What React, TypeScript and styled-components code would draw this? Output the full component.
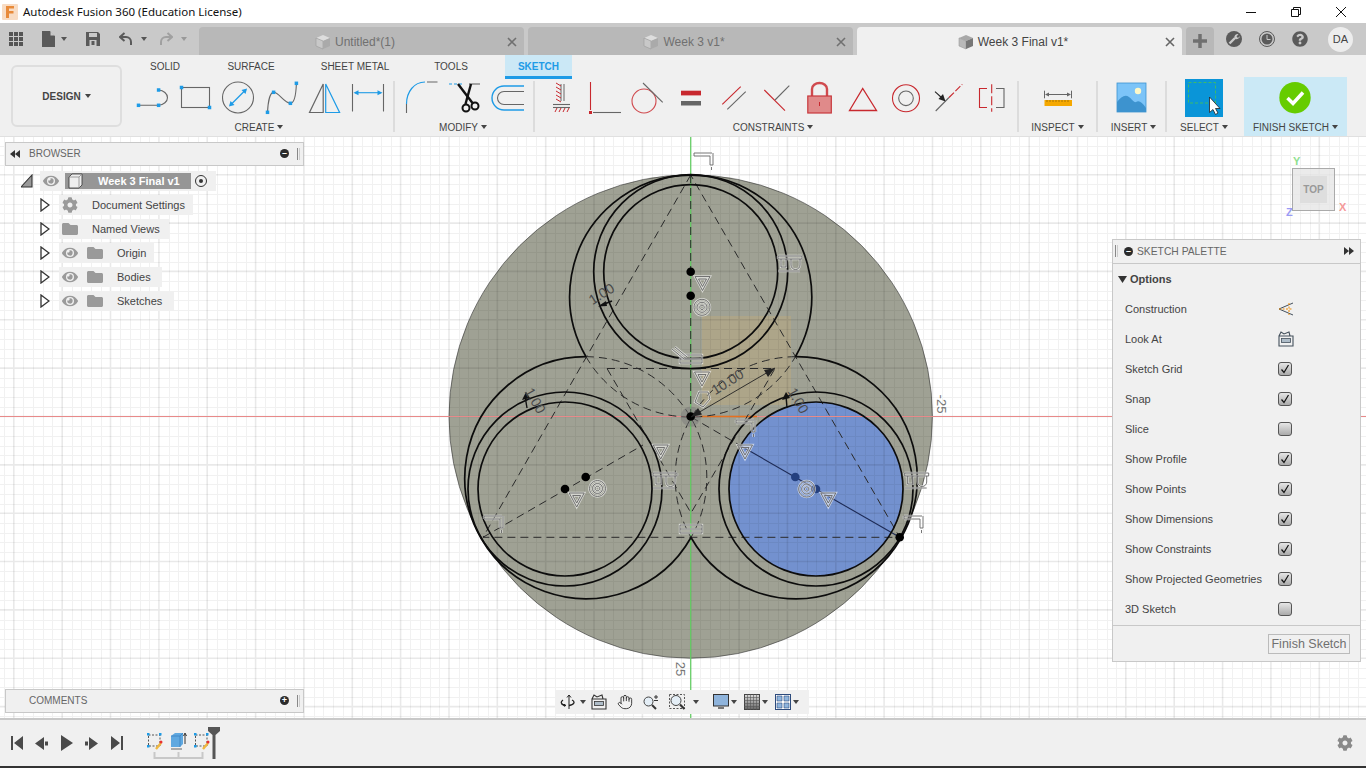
import React from 'react';
import styled, { createGlobalStyle } from 'styled-components';
import { FaCog, FaEye, FaFolder, FaQuestionCircle } from 'react-icons/fa';
import { Hand } from 'lucide-react';

const BLUE = '#1e9be6';
const GREY = '#666';
const RED = '#c8282e';
const SANS = '"Liberation Sans", Arial, sans-serif';

const GlobalStyle = createGlobalStyle`
    html, body { margin: 0; padding: 0; background: #fff; overflow: hidden; }
    body { font-family: ${SANS}; }
    * { box-sizing: border-box; }
`;

const Page = styled.div`
    width: 1366px;
    height: 768px;
    display: flex;
    flex-direction: column;
    overflow: hidden;
`;

/* title bar */
const TitleBar = styled.div`
    height: 23px;
    flex: none;
    display: flex;
    align-items: center;
    background: #fff;
    padding-left: 2px;
`;
const TitleText = styled.span`
    margin-left: 5px;
    font: 11.5px "Noto Sans", sans-serif;
    color: #111;
`;
const WinControls = styled.div`
    margin-left: auto;
    padding-right: 3px;
    display: flex;
`;
const WinButton = styled.div`
    width: 45px;
    height: 20px;
    display: flex;
    align-items: center;
    justify-content: center;
`;

/* tab bar */
const TabBar = styled.div`
    height: 32px;
    flex: none;
    display: flex;
    background: #c9c9c9;
`;
const QuickTools = styled.div`
    width: 199px;
    flex: none;
    display: flex;
    align-items: center;
`;
const Quick = styled.div<{ $ml: number }>`
    margin-left: ${(p) => p.$ml}px;
    display: flex;
`;
const Caret = styled.span<{ $color?: string }>`
    display: inline-block;
    width: 0;
    height: 0;
    border-left: 3.5px solid transparent;
    border-right: 3.5px solid transparent;
    border-top: 4px solid ${(p) => p.$color || '#444'};
`;
const DocTabs = styled.div`
    display: flex;
    gap: 4px;
    align-self: flex-end;
`;
const DocTab = styled.div<{ $active?: boolean }>`
    width: 325px;
    height: 28px;
    padding: 1px 5px 0 6px;
    display: flex;
    align-items: center;
    border-radius: 4px 4px 0 0;
    background: ${(p) => (p.$active ? '#f0f0f0' : '#b8b8b8')};
    color: ${(p) => (p.$active ? '#444' : '#707070')};
    font-size: 12px;
`;
const DocTabLabel = styled.div`
    flex: 1;
    display: flex;
    align-items: center;
    justify-content: center;
    gap: 4px;
`;
const PlusTab = styled.div`
    width: 28px;
    height: 28px;
    margin-left: 4px;
    align-self: flex-end;
    border-radius: 4px 4px 0 0;
    background: #b8b8b8;
    display: flex;
    align-items: center;
    justify-content: center;
`;
const AccountTools = styled.div`
    display: flex;
    align-items: center;
    color: #5a5a5a;
`;
const Avatar = styled.div`
    width: 25px;
    height: 25px;
    margin-left: 20px;
    border-radius: 50%;
    background: #ededed;
    color: #444;
    font-size: 11px;
    display: flex;
    align-items: center;
    justify-content: center;
`;

/* ribbon */
const Ribbon = styled.div`
    height: 82px;
    flex: none;
    display: flex;
    background: #f0f0f0;
    border-bottom: 1px solid #e0e0e0;
`;
const DesignButton = styled.div`
    width: 111px;
    height: 62px;
    margin: 10px 12px 0 11px;
    flex: none;
    border: 2px solid #dedede;
    border-radius: 6px;
    font-size: 10px;
    font-weight: bold;
    color: #444;
    display: flex;
    align-items: center;
    justify-content: center;
    gap: 4px;
`;
const RibbonBody = styled.div`
    display: flex;
    flex-direction: column;
`;
const TabRow = styled.div`
    height: 22px;
    display: flex;
    align-items: flex-start;
`;
const RibbonTab = styled.div<{ $w: number; $active?: boolean }>`
    width: ${(p) => p.$w}px;
    height: 24px;
    margin-left: ${(p) => (p.$active ? 7 : 0)}px;
    padding-top: 1px;
    display: flex;
    align-items: center;
    justify-content: center;
    font-size: 10px;
    font-weight: ${(p) => (p.$active ? 'bold' : 'normal')};
    color: ${(p) => (p.$active ? BLUE : '#444')};
    background: ${(p) => (p.$active ? '#cbe8f6' : 'transparent')};
    border-bottom: 3px solid ${(p) => (p.$active ? BLUE : 'transparent')};
`;
const GroupRow = styled.div`
    height: 60px;
    display: flex;
`;
const Group = styled.div<{ $w: number; $finish?: boolean }>`
    width: ${(p) => p.$w}px;
    padding-top: 1px;
    display: flex;
    flex-direction: column;
    align-items: center;
    background: ${(p) => (p.$finish ? '#cbe9f6' : 'transparent')};
`;
const ToolRow = styled.div`
    display: flex;
    height: 38px;
`;
const GroupLabel = styled.div<{ $pr?: number; $pl?: number }>`
    margin-top: 4px;
    padding-right: ${(p) => p.$pr || 0}px;
    padding-left: ${(p) => p.$pl || 0}px;
    height: 14px;
    display: flex;
    align-items: center;
    gap: 3px;
    font-size: 10px;
    color: #444;
`;
const Separator = styled.div`
    width: 2px;
    height: 51px;
    margin-top: 4px;
    background: #dcdcdc;
`;

/* viewport */
const Viewport = styled.div`
    position: relative;
    height: 581px;
    flex: none;
    overflow: hidden;
    background: #fff;
`;
const SketchCanvas = styled.svg`
    display: block;
`;
const DimText = styled.text`
    font-family: ${SANS};
    font-size: 14px;
    fill: #4a4a4a;
`;
const AxisText = styled.text`
    font-family: ${SANS};
    font-size: 13px;
    fill: #777;
`;

const PanelBar = styled.div`
    position: absolute;
    left: 5px;
    width: 299px;
    height: 24px;
    padding: 0 3px 1px 4px;
    display: flex;
    align-items: center;
    background: #f0f0f0;
    border: 1px solid #c8c8c8;
    color: #666;
    font-size: 10px;
`;
const BrowserBar = styled(PanelBar)`
    top: 5px;
`;
const CommentsBar = styled(PanelBar)`
    bottom: 5px;
`;
const PanelTitle = styled.span<{ $ml: number }>`
    margin-left: ${(p) => p.$ml}px;
`;
const RoundDot = styled.span`
    margin-left: auto;
    width: 9px;
    height: 9px;
    border-radius: 50%;
    background: #2b2b2b;
    display: flex;
    align-items: center;
    justify-content: center;
    color: #fff;
    font: bold 9px/9px ${SANS};
`;
const Grip = styled.span`
    margin-left: 8px;
    width: 3px;
    height: 12px;
    border-left: 1px solid #888;
    border-right: 1px solid #ccc;
`;

const Tree = styled.div`
    position: absolute;
    left: 21px;
    top: 34px;
    display: flex;
    flex-direction: column;
    gap: 4px;
`;
const TreeRow = styled.div`
    height: 20px;
    display: flex;
    align-items: center;
`;
const Chip = styled.div<{ $w: number }>`
    width: ${(p) => p.$w}px;
    height: 20px;
    display: flex;
    align-items: center;
    background: #f0f0f0;
    color: #444;
    font-size: 11px;
    position: relative;
`;
const Slot = styled.span<{ $x: number }>`
    position: absolute;
    left: ${(p) => p.$x}px;
    display: flex;
    color: #9a9a9a;
`;
const ChipLabel = styled(Slot)`
    color: #444;
`;
const RootBar = styled.div`
    position: absolute;
    left: 25px;
    top: 2px;
    width: 126px;
    height: 16px;
    background: #969696;
    color: #fff;
    font-weight: bold;
    font-size: 11px;
    line-height: 16px;
    padding-left: 33px;
`;
const Expander = styled.svg`
    width: 10px;
    height: 14px;
    margin: 0 9px 0 19px;
`;

const CubeWidget = styled.div`
    position: absolute;
    left: 1292px;
    top: 31px;
    width: 43px;
    height: 43px;
    background: rgba(228, 228, 228, 0.75);
    border: 1px solid #aaa;
    display: flex;
    align-items: center;
    justify-content: center;
`;
const CubeFace = styled.div`
    width: 27px;
    height: 27px;
    background: #dedede;
    color: #999;
    font-size: 10px;
    font-weight: bold;
    display: flex;
    align-items: center;
    justify-content: center;
`;
const AxisMark = styled.span<{ $color: string; $x: number; $y: number }>`
    position: absolute;
    left: ${(p) => p.$x}px;
    top: ${(p) => p.$y}px;
    color: ${(p) => p.$color};
    font-size: 11px;
    font-weight: bold;
    line-height: 11px;
`;

const Palette = styled.div`
    position: absolute;
    top: 102px;
    right: 5px;
    width: 249px;
    height: 423px;
    background: #f0f0f0;
    border: 1px solid #c8c8c8;
    display: flex;
    flex-direction: column;
    color: #444;
    font-size: 11px;
`;
const PaletteHead = styled.div`
    height: 24px;
    flex: none;
    padding: 0 6px 1px 2px;
    display: flex;
    align-items: center;
    border-bottom: 1px solid #c8c8c8;
    color: #666;
    font-size: 10.3px;
`;
const HeadDot = styled(RoundDot)`
    margin-left: 6px;
    margin-right: 4px;
`;
const HeadGrip = styled(Grip)`
    margin-left: 0;
`;
const OptionsRow = styled.div`
    height: 30px;
    padding-left: 5px;
    display: flex;
    align-items: center;
    gap: 3px;
    font-weight: bold;
    font-size: 11px;
`;
const OptionRow = styled.div`
    height: 30px;
    padding-left: 12px;
    display: flex;
    align-items: center;
    position: relative;
`;
const OptionControl = styled.div`
    position: absolute;
    left: 165px;
    display: flex;
`;
const CheckBox = styled.div`
    width: 14px;
    height: 14px;
    border: 1px solid #555;
    border-radius: 3px;
    background: linear-gradient(#e6e6e6, #aaa);
    display: flex;
    align-items: center;
    justify-content: center;
`;
const PaletteFoot = styled.div`
    margin-top: auto;
    height: 36px;
    border-top: 1px solid #c8c8c8;
    padding: 8px 10px 0 0;
    display: flex;
    justify-content: flex-end;
`;
const FinishButton = styled.div`
    width: 82px;
    height: 20px;
    border: 1px solid #bbb;
    color: #707070;
    font-size: 12.5px;
    display: flex;
    align-items: center;
    justify-content: center;
`;

const NavBar = styled.div`
    position: absolute;
    left: 555px;
    bottom: 4px;
    width: 254px;
    height: 24px;
    background: #f0f0f0;
    display: flex;
    align-items: center;
`;
const NavItem = styled.div<{ $ml: number }>`
    margin-left: ${(p) => p.$ml}px;
    display: flex;
    color: #333;
`;

/* timeline */
const Timeline = styled.div`
    height: 48px;
    flex: none;
    display: flex;
    align-items: center;
    background: #f0f0f0;
    border-top: 2px solid #c8c8c8;
    padding-left: 11px;
`;
const TimeItem = styled.div<{ $ml: number }>`
    margin-left: ${(p) => p.$ml}px;
    display: flex;
`;
const TimelineGear = styled.div`
    margin-left: auto;
    margin-right: 13px;
    color: #8a8a8a;
    display: flex;
`;
const BottomEdge = styled.div`
    height: 2px;
    flex: none;
    background: #333;
`;

const Tool = ({ x1, x2, children }: { x1: number; x2: number; children?: React.ReactNode }) => (
    <svg width={x2 - x1} height={38} viewBox={`${x1} 78 ${x2 - x1} 38`} fill="none" style={{ overflow: 'visible' }}>
        {children}
    </svg>
);

const Dot = ({ x, y }: { x: number; y: number }) => (
    <rect x={x - 1.75} y={y - 1.75} width={3.5} height={3.5} fill={BLUE} />
);

const CubeIcon = ({ light }: { light?: boolean }) => (
    <svg width="16" height="16" viewBox="0 0 16 16">
        <path d="M1 4l7-3 7 3-7 3z" fill={light ? '#ddd' : '#a8a8a8'} />
        <path d="M1 4l7 3v8l-7-3z" fill={light ? '#c8c8c8' : '#b9b9b9'} stroke="#9a9a9a" strokeWidth=".6" />
        <path d="M15 4l-7 3v8l7-3z" fill={light ? '#aaa' : '#777'} />
    </svg>
);

const CloseX = ({ c = '#707070' }: { c?: string }) => (
    <svg width="14" height="14" viewBox="0 0 14 14">
        <path d="M3 3l8 8M11 3l-8 8" stroke={c} strokeWidth="1.6" />
    </svg>
);

const EyeIcon = () => <FaEye size={16} />;
const FolderIcon = () => <FaFolder size={16} />;

const ExpandArrow = () => (
    <Expander viewBox="0 0 10 14">
        <path d="M1 1l8 6-8 6z" fill="#fff" stroke="#333" strokeWidth="1.3" />
    </Expander>
);

const PALETTE_ROWS: { label: string; checked?: boolean; icon?: 'construction' | 'look' }[] = [
    { label: 'Construction', icon: 'construction' },
    { label: 'Look At', icon: 'look' },
    { label: 'Sketch Grid', checked: true },
    { label: 'Snap', checked: true },
    { label: 'Slice', checked: false },
    { label: 'Show Profile', checked: true },
    { label: 'Show Points', checked: true },
    { label: 'Show Dimensions', checked: true },
    { label: 'Show Constraints', checked: true },
    { label: 'Show Projected Geometries', checked: true },
    { label: '3D Sketch', checked: false },
];

const LookAtIcon = ({ c = '#44505c' }: { c?: string }) => (
    <svg width="16" height="16" viewBox="0 0 16 16" fill="none">
        <path d="M1 5h14v10H1z M1 5l2-4 3 2 5-2 1 4" stroke={c} strokeWidth="1.1" />
        <rect x="3.5" y="7.5" width="9" height="4" fill="#aebcc8" stroke={c} strokeWidth=".8" />
    </svg>
);

const OX = 690.7;
const OY = 416.5;

const gridPaths = () => {
    let minor = '';
    let major = '';
    const step = 48.35 / 5;
    for (let i = -72; i <= 72; i++) {
        const x = OX + i * step;
        if (x < 0 || x > 1366) continue;
        if (i % 5 === 0) major += `M${x.toFixed(1)} 137V718`;
        else minor += `M${Math.round(x) + 0.5} 137V718`;
    }
    for (let j = -32; j <= 32; j++) {
        const y = OY + j * step;
        if (y < 137 || y > 718) continue;
        if (j % 5 === 0) major += `M0 ${y.toFixed(1)}H1366`;
        else minor += `M0 ${Math.round(y) + 0.5}H1366`;
    }
    return { minor, major };
};

// sketch constraint badges, drawn around their centre
const GLYPHS = {
    tri: 'M-7.5 -7H7.5L0 7Z M-4 -4.5H4L0 3Z',
    ring: 'M0 -8A8 8 0 1 1 -0.01 -8Z M0 -5A5 5 0 1 1 -0.01 -5Z M0 -2.2A2.2 2.2 0 1 1 -0.01 -2.2Z',
    clamp: 'M-9 -8H9 M-9 -5H7 M-9 -8V-5 M7 -5V4 M10 -8V4 M7 4H10 M8.5 6V9',
    tangent: 'M-12 -7H12 M-12 -4H12 M-12 -7V-4 M12 -7V-4 M-9 -4V4H-4V-4 M1 -4V2A4.5 4.5 0 0 0 10 2V-4 M-12 8H10',
    bar: 'M-11 -4H11V4H-11Z M-11 0H11',
    slash: 'M-8 -6L4 4 M-5 -8L7 2',
    penta: 'M-3 -8H6L8 -1L1 7L-7 2Z',
};

const Glyph = ({ kind, x, y }: { kind: keyof typeof GLYPHS; x: number; y: number }) => (
    <g transform={`translate(${x} ${y})`} fill="none">
        <path d={GLYPHS[kind]} stroke="rgba(255,255,255,.6)" strokeWidth="2.4" />
        <path d={GLYPHS[kind]} stroke="#666" strokeWidth=".9" />
    </g>
);

const Sketch = () => {
    const { minor, major } = gridPaths();
    const centres: [number, number][] = [
        [690.7, 271.7],
        [565, 489],
        [816, 489],
    ];
    return (
        <SketchCanvas width={1366} height={581} viewBox="0 137 1366 581" fill="none">
            <circle cx={OX} cy={OY} r={241.7} fill="#9fa194" stroke="#333" strokeWidth=".6" />
            <rect x={702} y={316} width={89} height={89} fill="#d8b56a" opacity=".24" />
            <circle cx={816} cy={489} r={87} fill="#7391cf" />
            <path d={minor} stroke="rgba(0,0,0,.055)" strokeWidth="1" shapeRendering="crispEdges" />
            <path d={major} stroke="rgba(0,0,0,.085)" strokeWidth="1.6" />

            <path d={`M0 ${OY}H1366`} stroke="#e88a8a" strokeWidth="1" />
            <path d={`M${OX} 137V718`} stroke="#62cf62" strokeWidth="1.2" />
            <path d={`M700 ${OY}H757`} stroke="#e8701f" strokeWidth="1.4" />

            <g stroke="#2a2a2a" strokeWidth="1" strokeDasharray="8 5">
                <path d="M690.7 175L483 537.3H899.7Z" />
                <path d="M690.7 175V417" />
                <path d="M483 537.3L643 445" />
                <path d="M691 417L741 446" />
                <path d="M607 368.5H775L691 513Z" />
                <path d="M586 356.7A121 121 0 0 0 795.4 356.7" />
                <path d="M586 356.7A121 121 0 0 1 691 537.5" />
                <path d="M795.4 356.7A121 121 0 0 0 691 537.5" />
            </g>
            <path d="M741 446L899.7 537.3" stroke="#1d2a55" strokeWidth="1.1" />

            <g stroke="#0c0c0c" strokeWidth="1.7">
                <path d="M586 356.7A121 121 0 1 1 795.4 356.7" />
                <path d="M586 356.7A121 121 0 1 0 691 537.5" />
                <path d="M795.4 356.7A121 121 0 1 1 691 537.5" />
                {centres.map(([cx, cy]) => (
                    <React.Fragment key={cx}>
                        <circle cx={cx} cy={cy} r={97} />
                        <circle cx={cx} cy={cy} r={87} />
                    </React.Fragment>
                ))}
            </g>

            <circle cx={OX} cy={OY} r={10} fill="#777" opacity=".45" />
            <g fill="#000">
                <circle cx={OX} cy={OY} r={4.3} />
                <circle cx={OX} cy={271.7} r={4.3} />
                <circle cx={OX} cy={295.7} r={4.3} />
                <circle cx={585.7} cy={477} r={4.3} />
                <circle cx={565} cy={489} r={4.3} />
                <circle cx={899.7} cy={537.3} r={4.3} />
            </g>
            <g fill="#24407f">
                <circle cx={795.3} cy={477} r={4.3} />
                <circle cx={816} cy={489} r={4.3} />
            </g>

            <path d="M691 417L775 368" stroke="#222" strokeWidth=".9" />
            <path d="M775 368L764 370L768 377Z M691 417L702 414.5L698 408Z" fill="#222" />
            <path d="M601.7 305L612 301" stroke="#111" strokeWidth="1.6" />
            <path d="M598 306.5L606 301L607 306Z" fill="#111" />
            <path d="M525 396L527 408" stroke="#111" strokeWidth="1.4" />
            <path d="M522 400L526 392L530 398Z" fill="#111" />
            <path d="M786 396L787 408" stroke="#111" strokeWidth="1.4" />
            <path d="M782 400L786 392L790 398Z" fill="#111" />

            <DimText transform="translate(730 386) rotate(-32)" textAnchor="middle">10.00</DimText>
            <DimText transform="translate(604 298) rotate(-32)" textAnchor="middle">1.00</DimText>
            <DimText transform="translate(531 403) rotate(60)" textAnchor="middle">1.00</DimText>
            <DimText transform="translate(794 403) rotate(60)" textAnchor="middle">1.00</DimText>
            <AxisText transform="translate(937 404) rotate(90)" textAnchor="middle">-25</AxisText>
            <AxisText transform="translate(676 669) rotate(90)" textAnchor="middle">25</AxisText>

            <Glyph kind="tri" x={702.5} y={283.5} />
            <Glyph kind="tri" x={702} y={379} />
            <Glyph kind="tri" x={576.7} y={500} />
            <Glyph kind="tri" x={828.3} y={500} />
            <Glyph kind="tri" x={660.7} y={452} />
            <Glyph kind="tri" x={745} y={452} />
            <Glyph kind="ring" x={702} y={307.3} />
            <Glyph kind="ring" x={597.5} y={488.5} />
            <Glyph kind="ring" x={806.7} y={489} />
            <Glyph kind="clamp" x={703} y={161} />
            <Glyph kind="clamp" x={493} y={524} />
            <Glyph kind="clamp" x={913} y={524} />
            <Glyph kind="clamp" x={745} y={428} />
            <Glyph kind="tangent" x={790} y={263} />
            <Glyph kind="tangent" x={665} y={480} />
            <Glyph kind="tangent" x={916.7} y={480} />
            <Glyph kind="bar" x={691} y={359} />
            <Glyph kind="bar" x={691} y={529} />
            <Glyph kind="slash" x={680} y={355} />
            <Glyph kind="penta" x={702} y={400} />
        </SketchCanvas>
    );
};

const App = () => (
    <Page>
        <GlobalStyle />
        <TitleBar>
            <svg width="16" height="16" viewBox="0 0 16 16">
                <rect width="16" height="16" rx="1" fill="#f8dcc4" />
                <path d="M4 2h8v2.500H7V7h4.500v2.500H7V14H4z" fill="#e88a3a" />
            </svg>
            <TitleText>Autodesk Fusion 360 (Education License)</TitleText>
            <WinControls>
                <WinButton>
                    <svg width="10" height="10" viewBox="0 0 10 10">
                        <path d="M0 5.5h10" stroke="#111" />
                    </svg>
                </WinButton>
                <WinButton>
                    <svg width="10" height="10" viewBox="0 0 10 10" fill="none">
                        <path d="M.5 2.500h7v7h-7z M2.500 2.500v-2h7v7h-2" stroke="#111" />
                    </svg>
                </WinButton>
                <WinButton>
                    <svg width="10" height="10" viewBox="0 0 10 10">
                        <path d="M0 0l10 10M10 0L0 10" stroke="#111" />
                    </svg>
                </WinButton>
            </WinControls>
        </TitleBar>

        <TabBar>
            <QuickTools>
                <Quick $ml={9}>
                    <svg width="14" height="14" viewBox="0 0 14 14" fill="#555">
                        {[0, 5, 10].map((x) =>
                            [0, 5, 10].map((y) => <rect key={`${x}-${y}`} x={x} y={y} width="4" height="4" />)
                        )}
                    </svg>
                </Quick>
                <Quick $ml={19}>
                    <svg width="13" height="16" viewBox="0 0 13 16">
                        <path d="M0 0h8l5 5v11H0z" fill="#5a5a5a" />
                        <path d="M8.500 0v4.500h4.500z" fill="#c9c9c9" />
                    </svg>
                </Quick>
                <Quick $ml={6}>
                    <Caret $color="#555" />
                </Quick>
                <Quick $ml={19}>
                    <svg width="14" height="14" viewBox="0 0 14 14">
                        <path d="M0 0h12l2 2v12H0z" fill="#5a5a5a" />
                        <path d="M3 1h8v4H3z M3.500 8h7v6h-7z" fill="#c9c9c9" />
                        <path d="M5.500 9h3v4h-3z" fill="#5a5a5a" />
                    </svg>
                </Quick>
                <Quick $ml={19}>
                    <svg width="13" height="14" viewBox="0 0 13 14" fill="none">
                        <path d="M5.500 1L1 5l4.500 4" stroke="#5a5a5a" strokeWidth="2" />
                        <path d="M1.500 5H7a5 5 0 0 1 5 5v3" stroke="#5a5a5a" strokeWidth="2" />
                    </svg>
                </Quick>
                <Quick $ml={9}>
                    <Caret $color="#555" />
                </Quick>
                <Quick $ml={13}>
                    <svg width="13" height="14" viewBox="0 0 13 14" fill="none">
                        <path d="M7.500 1L12 5 7.500 9" stroke="#a0a0a0" strokeWidth="2" />
                        <path d="M11.500 5H6a5 5 0 0 0-5 5v3" stroke="#a0a0a0" strokeWidth="2" />
                    </svg>
                </Quick>
                <Quick $ml={8}>
                    <Caret $color="#999" />
                </Quick>
            </QuickTools>
            <DocTabs>
                <DocTab>
                    <DocTabLabel>
                        <CubeIcon light />
                        Untitled*(1)
                    </DocTabLabel>
                    <CloseX />
                </DocTab>
                <DocTab>
                    <DocTabLabel>
                        <CubeIcon light />
                        Week 3 v1*
                    </DocTabLabel>
                    <CloseX />
                </DocTab>
                <DocTab $active>
                    <DocTabLabel>
                        <CubeIcon />
                        Week 3 Final v1*
                    </DocTabLabel>
                    <CloseX c="#666" />
                </DocTab>
            </DocTabs>
            <PlusTab>
                <svg width="14" height="14" viewBox="0 0 14 14">
                    <path d="M7 0v14M0 7h14" stroke="#707070" strokeWidth="3.500" />
                </svg>
            </PlusTab>
            <AccountTools>
                <Quick $ml={12}>
                    <svg width="16" height="16" viewBox="0 0 16 16" fill="none">
                        <circle cx="8" cy="8" r="8" fill="#5a5a5a" />
                        <path d="M3.500 12.500L9 7" stroke="#c9c9c9" strokeWidth="2.400" />
                        <path d="M8.500 7.500A3.500 3.500 0 0 1 12.500 3L10.500 5.500L12 7L14 5A3.500 3.500 0 0 1 8.500 7.500Z" fill="#c9c9c9" />
                    </svg>
                </Quick>
                <Quick $ml={17}>
                    <svg width="16" height="16" viewBox="0 0 16 16" fill="none">
                        <circle cx="8" cy="8" r="7.500" stroke="#5a5a5a" />
                        <circle cx="8" cy="8" r="5.500" fill="#5a5a5a" />
                        <path d="M8 4v4.500h3.500" stroke="#c9c9c9" />
                    </svg>
                </Quick>
                <Quick $ml={17}>
                    <FaQuestionCircle size={16} />
                </Quick>
                <Avatar>DA</Avatar>
            </AccountTools>
        </TabBar>

        <Ribbon>
            <DesignButton>
                DESIGN <Caret />
            </DesignButton>
            <RibbonBody>
                <TabRow>
                    <RibbonTab $w={62}>SOLID</RibbonTab>
                    <RibbonTab $w={110}>SURFACE</RibbonTab>
                    <RibbonTab $w={98}>SHEET METAL</RibbonTab>
                    <RibbonTab $w={94}>TOOLS</RibbonTab>
                    <RibbonTab $w={67} $active>
                        SKETCH
                    </RibbonTab>
                </TabRow>
                <GroupRow>
                    <Group $w={259}>
                        <ToolRow>
                            <Tool x1={134} x2={175}>
                                <path d="M138.500 105.300H158.600M158.600 90A10 7.700 0 0 1 158.600 105.300" stroke={GREY} strokeWidth="1.100" />
                                <Dot x={138.500} y={105.300} />
                                <Dot x={158.600} y={105.300} />
                                <Dot x={158.600} y={90} />
                            </Tool>
                            <Tool x1={175} x2={222}>
                                <rect x={181.500} y={87.500} width={28} height={20} stroke={GREY} strokeWidth="1.100" />
                                <Dot x={181.500} y={87.500} />
                                <Dot x={209.500} y={107.500} />
                            </Tool>
                            <Tool x1={222} x2={262}>
                                <circle cx={238} cy={97.500} r={15.500} stroke={GREY} strokeWidth="1.100" />
                                <path d="M230 105.500L246 89.500" stroke={BLUE} strokeWidth="1.200" />
                                <path d="M229 106.500l1.500-5.500 4 4z M247 88.500l-1.500 5.500-4-4z" fill={BLUE} />
                            </Tool>
                            <Tool x1={262} x2={303}>
                                <path d="M267.500 112.300C268 102 270 92.300 273.600 92.300C279 92.300 284 103.300 290.400 103.300C294 103.300 296 95 296.400 83.300" stroke={GREY} strokeWidth="1.100" />
                                <Dot x={267.500} y={112.300} />
                                <Dot x={273.600} y={92.300} />
                                <Dot x={290.400} y={103.300} />
                                <Dot x={296.400} y={83.300} />
                            </Tool>
                            <Tool x1={303} x2={347}>
                                <path d="M309.500 112.500H323.200V84Z" stroke={GREY} strokeWidth="1.200" />
                                <path d="M325.700 84L339.600 112.500H325.700Z" stroke={BLUE} strokeWidth="1.200" />
                            </Tool>
                            <Tool x1={347} x2={393}>
                                <path d="M352.500 84V111.500M383.500 84V111.500" stroke={GREY} strokeWidth="1.100" />
                                <path d="M355 92.700H381" stroke={BLUE} strokeWidth="1.100" />
                                <path d="M353.500 92.700l5-2.500v5z M382.500 92.700l-5-2.500v5z" fill={BLUE} />
                            </Tool>
                        </ToolRow>
                        <GroupLabel $pr={9}>
                            CREATE <Caret />
                        </GroupLabel>
                    </Group>
                    <Separator />
                    <Group $w={138}>
                        <ToolRow>
                            <Tool x1={395} x2={445}>
                                <path d="M406.500 104C406.500 92 414 82 425 82" stroke={BLUE} strokeWidth="1.200" />
                                <path d="M427 82H437.500M406.500 104V113" stroke={GREY} strokeWidth="1.100" />
                            </Tool>
                            <Tool x1={445} x2={487}>
                                <path d="M449 84H463" stroke={BLUE} strokeWidth="1.100" strokeDasharray="3 2" />
                                <path d="M469 84H480" stroke={GREY} strokeWidth="1.100" />
                                <path d="M458 84L472.500 103" stroke="#111" strokeWidth="2.400" />
                                <path d="M471 84L465.500 104" stroke="#111" strokeWidth="2.400" />
                                <circle cx={466} cy={108} r={3.500} stroke="#111" strokeWidth="2" />
                                <circle cx={475} cy={106} r={3.500} stroke="#111" strokeWidth="2" />
                            </Tool>
                            <Tool x1={487} x2={533}>
                                <path d="M524 86H504A12 12 0 0 0 504 110H524" stroke={BLUE} strokeWidth="1.400" />
                                <path d="M524 91.500H504A6.500 6.500 0 0 0 504 104.500H524" stroke={GREY} strokeWidth="1.100" />
                            </Tool>
                        </ToolRow>
                        <GroupLabel $pr={2}>
                            MODIFY <Caret />
                        </GroupLabel>
                    </Group>
                    <Separator />
                    <Group $w={482}>
                        <ToolRow>
                            <Tool x1={535} x2={580}>
                                <path d="M561 84V101 M564 84V101" stroke={GREY} />
                                <path d="M561 86l-5-3M561 90l-5-3M561 94l-5-3M561 98l-5-3M561 102l-5-3" stroke={RED} />
                                <path d="M553 104.500H570" stroke={GREY} strokeWidth="1.100" />
                                <path d="M553 107.500H570" stroke={GREY} strokeWidth="1.100" />
                                <path d="M557 108l-2 4M561 108l-2 4M565 108l-2 4M569 108l-2 4" stroke={RED} />
                            </Tool>
                            <Tool x1={580} x2={628}>
                                <path d="M590.500 82V110" stroke={RED} strokeWidth="1.100" />
                                <rect x={589} y={111} width={3} height={3} fill={RED} />
                                <path d="M593 112.500H621" stroke={GREY} strokeWidth="1.100" />
                            </Tool>
                            <Tool x1={628} x2={675}>
                                <circle cx={644} cy={101} r={12} stroke="#d04a4e" strokeWidth="1.100" />
                                <path d="M643 83L662.700 102.300" stroke={GREY} strokeWidth="1.100" />
                            </Tool>
                            <Tool x1={675} x2={710}>
                                <rect x={681} y={90.700} width={20} height={4.700} fill={RED} />
                                <rect x={681} y={101} width={20} height={4.500} fill={GREY} />
                            </Tool>
                            <Tool x1={710} x2={755}>
                                <path d="M722.300 104.300L740.700 86.700" stroke={RED} strokeWidth="1.100" />
                                <path d="M727.300 109.300L745.700 91.700" stroke={GREY} strokeWidth="1.100" />
                            </Tool>
                            <Tool x1={755} x2={800}>
                                <path d="M764.300 90L785 110.700" stroke={RED} strokeWidth="1.100" />
                                <path d="M775 100L789.300 85.700" stroke={GREY} strokeWidth="1.100" />
                            </Tool>
                            <Tool x1={800} x2={840}>
                                <path d="M812 96V89A7.500 6 0 0 1 827 89V96" stroke="#d04a4e" strokeWidth="2.400" />
                                <rect x={807.800} y={96} width={23.500} height={17} fill="#e08a8a" stroke="#c8383c" strokeWidth="1.200" />
                                <path d="M819.500 102V106" stroke={RED} />
                            </Tool>
                            <Tool x1={840} x2={885}>
                                <path d="M849.500 110.500H876.500L862.700 88.500Z" stroke={RED} strokeWidth="1.300" />
                            </Tool>
                            <Tool x1={885} x2={930}>
                                <circle cx={906} cy={98.300} r={13.500} stroke={RED} strokeWidth="1.100" />
                                <circle cx={906} cy={98.300} r={7.300} stroke={GREY} strokeWidth="1.100" />
                            </Tool>
                            <Tool x1={930} x2={972}>
                                <path d="M935.700 111L949 97.500" stroke={GREY} strokeWidth="1.100" />
                                <path d="M949 97.500L962.300 84.300" stroke={RED} strokeWidth="1.100" strokeDasharray="7 2" />
                                <path d="M935 91.700L942 98" stroke="#222" strokeWidth="1.100" />
                                <path d="M945.500 101.500L938.500 99L943 94Z" fill="#222" />
                            </Tool>
                            <Tool x1={972} x2={1017}>
                                <path d="M991.700 84.300V111.700" stroke={RED} strokeWidth="1.100" strokeDasharray="9 3" />
                                <path d="M987 88.500H979.500V107.500H987" stroke={RED} strokeWidth="1.100" />
                                <path d="M996 88.500H1004V107.500H996" stroke={GREY} strokeWidth="1.100" />
                            </Tool>
                        </ToolRow>
                        <GroupLabel $pr={6}>
                            CONSTRAINTS <Caret />
                        </GroupLabel>
                    </Group>
                    <Separator />
                    <Group $w={77}>
                        <ToolRow>
                            <Tool x1={1019} x2={1096}>
                                <path d="M1044.500 90.700V98.300M1071.500 90.700V98.300M1046 94.500H1070" stroke={GREY} />
                                <path d="M1045 94.500l4-2v4z M1071 94.500l-4-2v4z" fill={GREY} />
                                <rect x={1044.500} y={100} width={27.500} height={6} fill="#f5a800" />
                                <path d="M1047 100v2M1050 100v2M1053 100v2M1056 100v2M1059 100v2M1062 100v2M1065 100v2M1068 100v2" stroke="#8a6000" strokeWidth=".7" />
                            </Tool>
                        </ToolRow>
                        <GroupLabel>
                            INSPECT <Caret />
                        </GroupLabel>
                    </Group>
                    <Separator />
                    <Group $w={67}>
                        <ToolRow>
                            <Tool x1={1098} x2={1165}>
                                <rect x={1117} y={83} width={29} height={29} fill="#7cc4f8" stroke="#3d93cf" strokeWidth=".8" />
                                <path d="M1117 112V102C1121 97 1125 94 1129 97C1132 99 1134 103 1136 102C1139 100 1142 102 1146 108V112Z" fill="#3d93cf" />
                                <circle cx={1138} cy={91} r={3.200} fill="#fdf8c8" />
                            </Tool>
                        </ToolRow>
                        <GroupLabel $pl={4}>
                            INSERT <Caret />
                        </GroupLabel>
                    </Group>
                    <Separator />
                    <Group $w={77}>
                        <ToolRow>
                            <Tool x1={1167} x2={1244}>
                                <rect x={1185} y={79} width={38} height={38} fill="#0a95d8" />
                                <rect x={1188.500} y={82.500} width={27} height={20.500} stroke="#3dbb6a" strokeDasharray="3 2" />
                                <path d="M1209.500 97V112.500L1213 109.500L1215.500 114.500L1218 113L1215.500 108.500H1220Z" fill="#fff" stroke="#222" strokeWidth=".8" />
                            </Tool>
                        </ToolRow>
                        <GroupLabel $pr={3}>
                            SELECT <Caret />
                        </GroupLabel>
                    </Group>
                    <Group $w={103} $finish>
                        <ToolRow>
                            <Tool x1={1244} x2={1347}>
                                <circle cx={1295} cy={97.700} r={15.700} fill="#66cc00" />
                                <path d="M1287.500 98L1293 103.500L1303 92.500" stroke="#fff" strokeWidth="3.500" />
                            </Tool>
                        </ToolRow>
                        <GroupLabel>
                            FINISH SKETCH <Caret />
                        </GroupLabel>
                    </Group>
                </GroupRow>
            </RibbonBody>
        </Ribbon>

        <Viewport>
            <Sketch />

            <BrowserBar>
                <svg width="10" height="8" viewBox="0 0 10 8">
                    <path d="M5 0v8L0 4z M10 0v8L5 4z" fill="#333" />
                </svg>
                <PanelTitle $ml={9}>BROWSER</PanelTitle>
                <RoundDot>–</RoundDot>
                <Grip />
            </BrowserBar>

            <Tree>
                <TreeRow>
                    <svg width="19" height="14" viewBox="0 0 19 14" style={{ flex: 'none' }}>
                        <path d="M0 13L11 1V13Z" fill="#999" stroke="#333" strokeWidth="1.100" />
                    </svg>
                    <Chip $w={176}>
                        <Slot $x={3}>
                            <EyeIcon />
                        </Slot>
                        <RootBar>Week 3 Final v1</RootBar>
                        <Slot $x={28}>
                            <svg width="15" height="16" viewBox="0 0 15 16">
                                <path d="M1 4l3-3h10v11l-3 3H1z" fill="#eee" stroke="#333" strokeWidth=".8" />
                                <path d="M1 4h10v11M11 4l3-3" fill="none" stroke="#888" strokeWidth=".8" />
                            </svg>
                        </Slot>
                        <Slot $x={155}>
                            <svg width="12" height="12" viewBox="0 0 12 12" fill="none">
                                <circle cx="6" cy="6" r="5.500" stroke="#333" />
                                <circle cx="6" cy="6" r="2" fill="#333" />
                            </svg>
                        </Slot>
                    </Chip>
                </TreeRow>
                <TreeRow>
                    <ExpandArrow />
                    <Chip $w={134}>
                        <Slot $x={3}>
                            <FaCog size={16} />
                        </Slot>
                        <ChipLabel $x={33}>Document Settings</ChipLabel>
                    </Chip>
                </TreeRow>
                <TreeRow>
                    <ExpandArrow />
                    <Chip $w={110}>
                        <Slot $x={3}>
                            <FolderIcon />
                        </Slot>
                        <ChipLabel $x={33}>Named Views</ChipLabel>
                    </Chip>
                </TreeRow>
                {[
                    ['Origin', 95],
                    ['Bodies', 103],
                    ['Sketches', 115],
                ].map(([name, w]) => (
                    <TreeRow key={name}>
                        <ExpandArrow />
                        <Chip $w={w as number}>
                            <Slot $x={3}>
                                <EyeIcon />
                            </Slot>
                            <Slot $x={28}>
                                <FolderIcon />
                            </Slot>
                            <ChipLabel $x={58}>{name}</ChipLabel>
                        </Chip>
                    </TreeRow>
                ))}
            </Tree>

            <CubeWidget>
                <CubeFace>TOP</CubeFace>
                <AxisMark $color="#8fe08f" $x={0} $y={-13}>
                    Y
                </AxisMark>
                <AxisMark $color="#f59a9a" $x={46} $y={33}>
                    X
                </AxisMark>
                <AxisMark $color="#9a9af5" $x={-7} $y={38}>
                    Z
                </AxisMark>
            </CubeWidget>

            <Palette>
                <PaletteHead>
                    <HeadGrip />
                    <HeadDot>–</HeadDot>
                    SKETCH PALETTE
                    <svg width="10" height="8" viewBox="0 0 10 8" style={{ marginLeft: 'auto' }}>
                        <path d="M0 0v8l5-4z M5 0v8l5-4z" fill="#333" />
                    </svg>
                </PaletteHead>
                <OptionsRow>
                    <svg width="9" height="7" viewBox="0 0 9 7">
                        <path d="M0 0h9L4.500 7z" fill="#333" />
                    </svg>
                    Options
                </OptionsRow>
                {PALETTE_ROWS.map((row) => (
                    <OptionRow key={row.label}>
                        {row.label}
                        <OptionControl>
                            {row.icon === 'construction' && (
                                <svg width="16" height="16" viewBox="0 0 16 16" fill="none">
                                    <path d="M15 2L1 8l14 6" stroke="#44505c" />
                                    <path d="M1 8h14M11 2v12" stroke="#f08a00" strokeDasharray="2 1.500" />
                                </svg>
                            )}
                            {row.icon === 'look' && <LookAtIcon />}
                            {!row.icon && (
                                <CheckBox>
                                    {row.checked && (
                                        <svg width="10" height="10" viewBox="0 0 10 10" fill="none">
                                            <path d="M1.500 5.500L4 8.500L8.500 1" stroke="#111" strokeWidth="1.200" />
                                        </svg>
                                    )}
                                </CheckBox>
                            )}
                        </OptionControl>
                    </OptionRow>
                ))}
                <PaletteFoot>
                    <FinishButton>Finish Sketch</FinishButton>
                </PaletteFoot>
            </Palette>

            <CommentsBar>
                <PanelTitle $ml={19}>COMMENTS</PanelTitle>
                <RoundDot>+</RoundDot>
                <Grip />
            </CommentsBar>

            <NavBar>
                <NavItem $ml={5}>
                    <svg width="16" height="16" viewBox="0 0 16 16" fill="none">
                        <path d="M9 1v14M9 1L7 3.500M9 1l2 2.500" stroke="#222" />
                        <path d="M3 6C0 8 1 11 6 11.500M12 6c3 1.500 3 4.500-3 5.500" stroke="#222" strokeWidth="1.300" />
                        <path d="M1 10h4v3z" fill="#222" />
                    </svg>
                </NavItem>
                <NavItem $ml={4}>
                    <Caret />
                </NavItem>
                <NavItem $ml={5}>
                    <LookAtIcon c="#333" />
                </NavItem>
                <NavItem $ml={10}>
                    <Hand size={16} strokeWidth={1.400} />
                </NavItem>
                <NavItem $ml={10}>
                    <svg width="16" height="16" viewBox="0 0 16 16" fill="none">
                        <circle cx="5.500" cy="7.500" r="4.500" fill="#e4eef6" stroke="#444" />
                        <path d="M9 11l4 4" stroke="#333" strokeWidth="2" />
                        <path d="M13 1v4M11 3h4M11 6.500h4" stroke="#333" />
                    </svg>
                </NavItem>
                <NavItem $ml={10}>
                    <svg width="17" height="16" viewBox="0 0 17 16" fill="none">
                        <rect x=".500" y=".500" width="15" height="14" stroke="#555" strokeDasharray="2 1.500" />
                        <circle cx="7" cy="6.500" r="5" fill="#e4eef6" stroke="#444" />
                        <path d="M11 10.500l4.500 4.500" stroke="#333" strokeWidth="2.200" />
                    </svg>
                </NavItem>
                <NavItem $ml={7}>
                    <Caret />
                </NavItem>
                <NavItem $ml={14}>
                    <svg width="16" height="16" viewBox="0 0 16 16">
                        <rect x=".500" y=".500" width="15" height="11.500" fill="#8fb4dc" stroke="#333" />
                        <path d="M5 13h6v2H5z" fill="#777" />
                    </svg>
                </NavItem>
                <NavItem $ml={2}>
                    <Caret />
                </NavItem>
                <NavItem $ml={7}>
                    <svg width="16" height="16" viewBox="0 0 16 16">
                        <defs>
                            <linearGradient id="gridShade" x1="0" y1="0" x2="0" y2="1">
                                <stop offset="0" stopColor="#ddd" />
                                <stop offset="1" stopColor="#666" />
                            </linearGradient>
                        </defs>
                        <rect x=".500" y=".500" width="15" height="15" fill="url(#gridShade)" stroke="#444" />
                        <path d="M3.500 0v16M6.500 0v16M9.500 0v16M12.500 0v16M0 3.500h16M0 6.500h16M0 9.500h16M0 12.500h16" stroke="#555" strokeWidth=".6" />
                    </svg>
                </NavItem>
                <NavItem $ml={2}>
                    <Caret />
                </NavItem>
                <NavItem $ml={7}>
                    <svg width="16" height="16" viewBox="0 0 16 16">
                        <rect x=".500" y=".500" width="15" height="15" fill="#fff" stroke="#2c4a7c" />
                        <path d="M2 2h5v5H2z M9 2h5v5H9z M2 9h5v5H2z M9 9h5v5H9z" fill="#8fb4dc" stroke="#2c4a7c" strokeWidth=".6" />
                    </svg>
                </NavItem>
                <NavItem $ml={2}>
                    <Caret />
                </NavItem>
            </NavBar>
        </Viewport>

        <Timeline>
            <TimeItem $ml={0}>
                <svg width="12" height="14" viewBox="0 0 12 14" fill="#4a4a4a">
                    <path d="M0 0h2v14H0z M12 0v14L3 7z" />
                </svg>
            </TimeItem>
            <TimeItem $ml={12}>
                <svg width="13" height="13" viewBox="0 0 13 13" fill="#4a4a4a">
                    <path d="M9 0v13L0 6.500z M10 4.500h3v4h-3z" />
                </svg>
            </TimeItem>
            <TimeItem $ml={13}>
                <svg width="12" height="16" viewBox="0 0 12 16" fill="#4a4a4a">
                    <path d="M0 0l12 8-12 8z" />
                </svg>
            </TimeItem>
            <TimeItem $ml={12}>
                <svg width="13" height="13" viewBox="0 0 13 13" fill="#4a4a4a">
                    <path d="M4 0v13l9-6.500z M0 4.500h3v4H0z" />
                </svg>
            </TimeItem>
            <TimeItem $ml={13}>
                <svg width="12" height="14" viewBox="0 0 12 14" fill="#4a4a4a">
                    <path d="M0 0v14l9-7z M10 0h2v14h-2z" />
                </svg>
            </TimeItem>
            <TimeItem $ml={24}>
                <svg width="74" height="36" viewBox="147 727 74 36" fill="none" style={{ overflow: 'visible' }}>
                    <path d="M148.500 737H160V748H148.500Z" stroke="#555" strokeDasharray="2 1.500" />
                    <path d="M147 735h2.500v2.500h-2.500zM159 735h2.500v2.500h-2.500zM147 747h2.500v2.500h-2.500z" fill={BLUE} />
                    <path d="M156 751L161 745" stroke="#f0b840" strokeWidth="2.400" />
                    <circle cx={161} cy={744} r={1.500} fill="#e83030" />
                    <path d="M171 738L175 735H183V746L180 749H171Z" fill="#5fa8e0" />
                    <path d="M171 738H180V749M180 738L183 735" stroke="#3a80c0" strokeWidth=".8" />
                    <path d="M171 750H182V752H171Z" fill="#aaa" />
                    <path d="M185 746V736M183.500 738L185 735L186.500 738" stroke="#333" />
                    <path d="M195.500 737H207V748H195.500Z" stroke="#555" strokeDasharray="2 1.500" />
                    <path d="M194 735h2.500v2.500h-2.500zM206 735h2.500v2.500h-2.500zM194 747h2.500v2.500h-2.500z" fill={BLUE} />
                    <path d="M203 751L208 745" stroke="#f0b840" strokeWidth="2.400" />
                    <circle cx={208} cy={744} r={1.500} fill="#e83030" />
                    <path d="M154.500 754V760H202.500V754M178.500 754V760" stroke="#c8c8c8" strokeWidth="2" />
                    <path d="M208 729H220V733L215.500 737V761H212.500V737L208 733Z" fill="#555" />
                </svg>
            </TimeItem>
            <TimelineGear>
                <FaCog size={16} />
            </TimelineGear>
        </Timeline>
        <BottomEdge />
    </Page>
);

export default App;
